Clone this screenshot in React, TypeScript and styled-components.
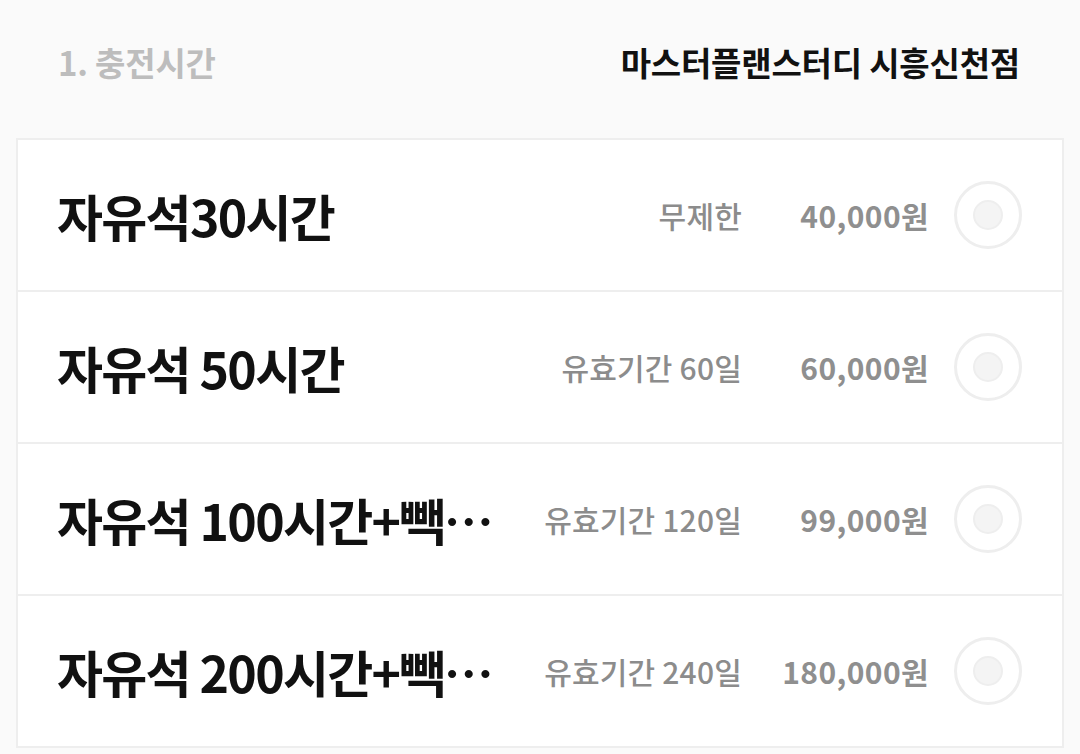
import { createGlobalStyle, styled } from 'styled-components';

type Plan = {
    name: string;
    note: string;
    price: string;
};

const plans: Plan[] = [
    { name: '자유석30시간', note: '무제한', price: '40,000원' },
    { name: '자유석 50시간', note: '유효기간 60일', price: '60,000원' },
    { name: '자유석 100시간+빽다방 음료쿠폰', note: '유효기간 120일', price: '99,000원' },
    { name: '자유석 200시간+빽다방 음료쿠폰', note: '유효기간 240일', price: '180,000원' },
];

export default function App() {
    return (
        <>
            <GlobalStyle />
            <Page>
                <Header>
                    <StepTitle>1. 충전시간</StepTitle>
                    <StoreName>마스터플랜스터디 시흥신천점</StoreName>
                </Header>
                <Card>
                    {plans.map((plan) => (
                        <Row key={plan.name}>
                            <PlanName>{plan.name}</PlanName>
                            <Note>{plan.note}</Note>
                            <Price>{plan.price}</Price>
                            <Radio>
                                <RadioDot />
                            </Radio>
                        </Row>
                    ))}
                </Card>
            </Page>
        </>
    );
}

const GlobalStyle = createGlobalStyle`
    html, body {
        margin: 0;
        background: #fafafa;
        font-family: 'Noto Sans CJK KR', 'Noto Sans', sans-serif;
    }
`;

const Page = styled.div`
    width: 1080px;
    height: 754px;
    overflow: hidden;
    padding: 0 16px;
    box-sizing: border-box;
`;

const Header = styled.div`
    display: flex;
    justify-content: space-between;
    align-items: center;
    height: 138px;
    padding: 0 44px 14px 42px;
    box-sizing: border-box;
`;

const StepTitle = styled.h2`
    margin: 0;
    font-size: 33px;
    font-weight: 700;
    letter-spacing: -0.2px;
    color: #bdbdbd;
`;

const StoreName = styled.h1`
    margin: 0;
    font-size: 33px;
    font-weight: 700;
    letter-spacing: -0.2px;
    color: #111;
`;

const Card = styled.div`
    background: #fff;
    border: 2px solid #eeeeee;
`;

const Row = styled.div`
    display: flex;
    align-items: center;
    height: 150px;
    padding: 0 40px 0 39px;
    border-top: 2px solid #eeeeee;

    &:first-child {
        border-top: none;
    }
`;

const PlanName = styled.div`
    flex: 1;
    min-width: 0;
    font-size: 50px;
    font-weight: 700;
    letter-spacing: -1.7px;
    color: #111;
    white-space: nowrap;
    overflow: hidden;
    text-overflow: ellipsis;
    padding-right: 30px;
`;

const Note = styled.div`
    font-size: 30px;
    font-weight: 500;
    letter-spacing: 0.2px;
    color: #8c8c8c;
    white-space: nowrap;
`;

const Price = styled.div`
    width: 187px;
    text-align: right;
    font-size: 30px;
    font-weight: 700;
    letter-spacing: 0.4px;
    color: #8f8f8f;
    white-space: nowrap;
`;

const Radio = styled.div`
    width: 62px;
    height: 62px;
    margin-left: 25px;
    border: 3px solid #eeeeee;
    border-radius: 50%;
    display: flex;
    align-items: center;
    justify-content: center;
    flex-shrink: 0;
`;

const RadioDot = styled.div`
    width: 26px;
    height: 26px;
    border-radius: 50%;
    background: #f4f4f4;
    border: 2px solid #eeeeee;
`;
